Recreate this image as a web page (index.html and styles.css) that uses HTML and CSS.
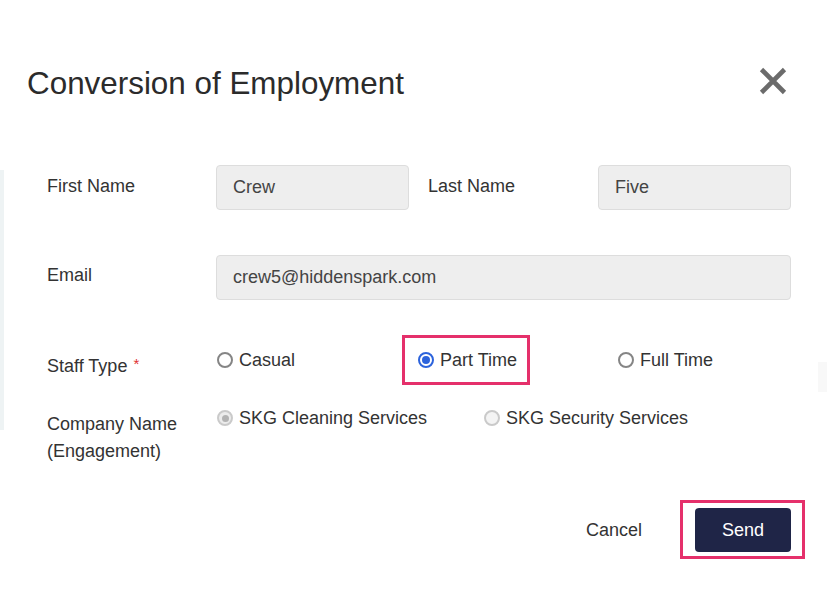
FILE: index.html
```html
<!DOCTYPE html>
<html lang="en">
<head>
<meta charset="utf-8">
<title>Conversion of Employment</title>
<link rel="stylesheet" href="styles.css">
</head>
<body>
<div class="modal">
  <div class="modal-header">
    <h1 class="modal-title">Conversion of Employment</h1>
    <button class="close-btn" aria-label="Close">
      <svg width="28" height="28" viewBox="0 0 28 28"><path d="M2.5 2.5 L25.5 25.5 M25.5 2.5 L2.5 25.5" stroke="#6b6b6b" stroke-width="4.6" fill="none"/></svg>
    </button>
  </div>
  <form class="form">
    <div class="row row-names">
      <label class="label label-input">First Name</label>
      <div class="input input-half">Crew</div>
      <label class="label label-input label-last">Last Name</label>
      <div class="input input-half">Five</div>
    </div>
    <div class="row row-email">
      <label class="label label-email">Email</label>
      <div class="input input-full">crew5@hiddenspark.com</div>
    </div>
    <div class="row row-staff">
      <div class="label label-radio">Staff Type <span class="req">*</span></div>
      <div class="options">
        <div class="option opt-staff"><span class="radio"></span>Casual</div>
        <div class="option opt-staff highlight"><span class="radio checked"></span>Part Time</div>
        <div class="option opt-staff"><span class="radio"></span>Full Time</div>
      </div>
    </div>
    <div class="row row-company">
      <div class="label label-radio label-multi">Company Name<br>(Engagement)</div>
      <div class="options">
        <div class="option opt-company"><span class="radio disabled checked-disabled"></span>SKG Cleaning Services</div>
        <div class="option opt-company"><span class="radio disabled"></span>SKG Security Services</div>
      </div>
    </div>
    <div class="footer">
      <button type="button" class="btn-cancel">Cancel</button>
      <button type="button" class="btn-send highlight-send">Send</button>
    </div>
  </form>
</div>
</body>
</html>
```

FILE: styles.css
```css
html, body {
  margin: 0;
  padding: 0;
  background: #ffffff;
}
body {
  width: 827px;
  height: 600px;
  overflow: hidden;
  position: relative;
  font-family: "Liberation Sans", Arial, sans-serif;
  color: #333333;
}
body::before {
  content: "";
  position: absolute;
  left: 0;
  top: 170px;
  width: 4px;
  height: 260px;
  background: #eef3f4;
}
body::after {
  content: "";
  position: absolute;
  left: 818px;
  top: 362px;
  width: 9px;
  height: 30px;
  background: #f8f8f8;
}
.modal {
  position: relative;
  z-index: 1;
}
.modal-header {
  display: flex;
  align-items: center;
  justify-content: space-between;
  padding: 66px 40px 0 27px;
}
.modal-title {
  margin: 0;
  font-weight: normal;
  font-size: 31.4px;
  line-height: 36px;
  color: #2b2b2b;
}
.close-btn {
  border: 0;
  background: none;
  padding: 0;
  width: 28px;
  height: 28px;
  margin-top: -6px;
  cursor: pointer;
}
.close-btn svg {
  display: block;
}
.form {
  padding: 0 36px 0 47px;
}
.row {
  display: flex;
  align-items: flex-start;
}
.label {
  flex: none;
  font-size: 18px;
  line-height: 22px;
  color: #333333;
}
.label-input {
  width: 169px;
  padding-top: 10px;
}
.label-last {
  width: 170px;
  margin-left: 19px;
}
.label-email {
  width: 169px;
  padding-top: 9px;
}
.label-radio {
  width: 169px;
  padding-top: 4px;
}
.label-multi {
  line-height: 27px;
  padding-top: 4px;
}
.req {
  color: #e03030;
  font-size: 15px;
  vertical-align: 3px;
  margin-left: 1px;
}
.input {
  box-sizing: border-box;
  height: 45px;
  line-height: 43px;
  border: 1px solid #dddddd;
  border-radius: 4px;
  background: #eeeeee;
  padding: 0 16px;
  font-size: 18px;
  color: #444444;
}
.input-half {
  flex: none;
  width: 193px;
}
.input-full {
  flex: 1;
}
.row-names {
  margin-top: 63px;
}
.row-email {
  margin-top: 45px;
}
.row-staff {
  margin-top: 49px;
}
.row-company {
  margin-top: 30px;
}
.options {
  display: flex;
  padding-left: 1px;
  flex: 1;
}
.option {
  flex: none;
  display: flex;
  align-items: center;
  font-size: 18px;
  line-height: 22px;
  white-space: nowrap;
  color: #333333;
  position: relative;
}
.opt-staff {
  width: 201px;
}
.opt-company {
  width: 267px;
}
.radio {
  box-sizing: border-box;
  width: 16px;
  height: 16px;
  border-radius: 50%;
  border: 2px solid #858585;
  background: #ffffff;
  margin-right: 6px;
  flex: none;
  position: relative;
}
.radio.checked {
  border: 2px solid #2c63dc;
}
.radio.checked::after {
  content: "";
  position: absolute;
  left: 2px;
  top: 2px;
  width: 8px;
  height: 8px;
  border-radius: 50%;
  background: #2c63dc;
}
.radio.disabled {
  border-color: #cacaca;
  background: #f4f4f4;
}
.radio.checked-disabled {
  background: #ececec;
}
.radio.checked-disabled::after {
  content: "";
  position: absolute;
  left: 2.5px;
  top: 2.5px;
  width: 7px;
  height: 7px;
  border-radius: 50%;
  background: #b3b3b3;
}
.highlight {
  width: auto;
  margin-right: 101px;
}
.highlight::before {
  content: "";
  position: absolute;
  top: -14px;
  bottom: -14px;
  left: -16px;
  right: -13px;
  border: 3px solid #e5306b;
}
.footer {
  display: flex;
  justify-content: flex-end;
  align-items: center;
  margin-top: 43px;
}
.btn-cancel {
  border: 0;
  background: none;
  padding: 0;
  font-family: inherit;
  font-size: 18px;
  color: #333333;
  margin-right: 53px;
  cursor: pointer;
}
.btn-send {
  position: relative;
  width: 96px;
  height: 44px;
  border: 0;
  border-radius: 4px;
  background: #1f2547;
  color: #ffffff;
  font-family: inherit;
  font-size: 18px;
  cursor: pointer;
}
.highlight-send::before {
  content: "";
  position: absolute;
  top: -8px;
  bottom: -7px;
  left: -15px;
  right: -14px;
  border: 3px solid #e5306b;
}
```
